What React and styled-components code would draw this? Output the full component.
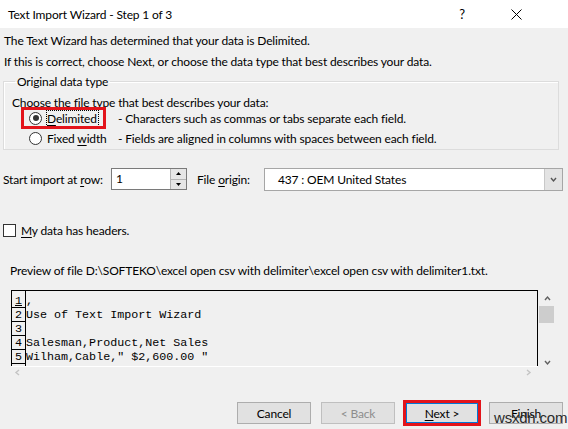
import React from 'react';
import styled, { createGlobalStyle } from 'styled-components';

const GlobalStyle = createGlobalStyle`
  html, body {
    margin: 0;
    padding: 0;
    background: #f0f0f0;
  }
  body {
    font-family: Lato, "Noto Sans", sans-serif;
    font-size: 12px;
    letter-spacing: -0.15px;
    color: #000;
  }
`;

const Window = styled.div`
  position: relative;
  width: 568px;
  height: 429px;
  background: #f0f0f0;
  display: flex;
  flex-direction: column;
  overflow: hidden;
`;

const TitleBar = styled.div`
  height: 28px;
  flex-shrink: 0;
  background: #fff;
  display: flex;
  align-items: center;
  padding: 0 25px 0 8px;
`;

const Title = styled.div`
  flex: 1;
`;

const TitleButton = styled.div`
  width: 54px;
  height: 28px;
  display: flex;
  align-items: center;
  justify-content: center;
  font-size: 13px;
`;

const Body = styled.div`
  display: flex;
  flex-direction: column;
  padding: 2px 5px 0 3px;
`;

const Line = styled.div`
  height: 21px;
  line-height: 21px;
  padding-left: 1px;
  white-space: nowrap;
`;

const GroupBox = styled.fieldset`
  margin: 1px 4px 0 0;
  padding: 7px 8px 1px;
  border: 1px solid #dcdcdc;
  box-shadow: inset 1px 1px 0 #fff;
`;

const Legend = styled.legend`
  padding: 0 2px;
  margin-left: 3px;
  height: 16px;
  line-height: 17px;
`;

const Prompt = styled.div`
  height: 14px;
  line-height: 14px;
  margin-bottom: -2px;
  white-space: nowrap;
`;

const OptionRow = styled.div`
  display: flex;
  align-items: center;
  height: 20px;
  padding-left: 12px;
  white-space: nowrap;
`;

const Option = styled.span`
  width: 94px;
  flex-shrink: 0;
  display: flex;
  align-items: center;
`;

const OptionMark = styled.span`
  display: inline-flex;
  align-items: center;
  gap: 5px;
  height: 16px;
  padding: 0 ${p => (p.$marked ? '5px' : '4px')} 0 5px;
  outline: ${p => (p.$marked ? '3px solid #e3141b' : 'none')};
  outline-offset: 0;
`;

const Radio = styled.span`
  width: 11px;
  height: 11px;
  border-radius: 50%;
  border: 1px solid #333;
  background: #fff;
  display: inline-flex;
  align-items: center;
  justify-content: center;
  &::after {
    content: '';
    width: 6px;
    height: 6px;
    border-radius: 50%;
    background: ${p => (p.$checked ? '#333' : 'transparent')};
  }
`;

const FocusText = styled.span`
  outline: ${p => (p.$focused ? '1px dotted #000' : 'none')};
  outline-offset: 0;
  padding-right: 1px;
`;

const Key = styled.span`
  text-decoration: underline;
  text-underline-offset: 2px;
`;

const FieldRow = styled.div`
  display: flex;
  align-items: center;
  height: 24px;
  margin-top: 17px;
  white-space: nowrap;
`;

const FieldLabel = styled.span`
  width: ${p => p.$width}px;
  flex-shrink: 0;
`;

const Spinner = styled.div`
  width: 76px;
  height: 22px;
  box-sizing: border-box;
  border: 1px solid #7a7a7a;
  background: #fff;
  display: flex;
  margin-right: 10px;
`;

const SpinnerValue = styled.span`
  flex: 1;
  padding-left: 4px;
  line-height: 20px;
`;

const SpinnerButtons = styled.div`
  width: 15px;
  display: flex;
  flex-direction: column;
  border-left: 1px solid #b4b4b4;
`;

const SpinButton = styled.div`
  flex: 1;
  background: #e6e6e6;
  display: flex;
  align-items: center;
  justify-content: center;
  & + & {
    border-top: 1px solid #b4b4b4;
  }
`;

const Select = styled.div`
  width: 299px;
  height: 23px;
  box-sizing: border-box;
  border: 1px solid #a6a6a6;
  background: #fff;
  display: flex;
`;

const SelectValue = styled.span`
  flex: 1;
  padding-left: 13px;
  line-height: 21px;
`;

const SelectArrow = styled.div`
  width: 17px;
  background: #e3e3e3;
  border-left: 1px solid #c8c8c8;
  display: flex;
  align-items: center;
  justify-content: center;
`;

const CheckRow = styled.label`
  display: flex;
  align-items: center;
  gap: 5px;
  height: 16px;
  margin-top: 31px;
`;

const CheckBox = styled.span`
  width: 11px;
  height: 11px;
  border: 1px solid #333;
  background: #fff;
`;

const PreviewLabel = styled.div`
  height: 16px;
  line-height: 16px;
  margin: 25px 0 0 7px;
  white-space: nowrap;
`;

const Preview = styled.div`
  margin: 11px 0 0 8px;
  width: 545px;
  height: 87px;
  display: grid;
  grid-template-columns: 1fr 18px;
  grid-template-rows: 76px 11px;
`;

const TextPane = styled.div`
  border: 1px solid #000;
  border-bottom: none;
  overflow: hidden;
  display: flex;
  flex-direction: column;
  padding-top: 3px;
  font-family: "Liberation Mono", "Courier New", monospace;
  font-size: 11.7px;
  letter-spacing: 0;
  background:
    linear-gradient(#000, #000) 13px 0 / 1px 100% no-repeat;
`;

const PreviewRow = styled.div`
  display: flex;
  height: 14px;
  line-height: 14px;
  white-space: pre;
`;

const LineNo = styled.span`
  width: 13px;
  flex-shrink: 0;
  box-sizing: border-box;
  border-bottom: 1px solid #000;
  text-align: center;
  text-decoration: ${p => (p.$underline ? 'underline' : 'none')};
`;

const LineText = styled.span`
  padding-left: 1px;
`;

const VScroll = styled.div`
  display: flex;
  flex-direction: column;
  align-items: center;
  padding-top: 5px;
`;

const Thumb = styled.div`
  width: 15px;
  height: 17px;
  margin: 4px 0 0 -1px;
  background: #cdcdcd;
`;

const Spacer = styled.div`
  flex: 1;
`;

const HScroll = styled.div`
  border-top: 1px solid #fff;
  display: flex;
  align-items: center;
  justify-content: space-between;
  padding: 0 6px 0 3px;
`;

const Footer = styled.div`
  display: flex;
  justify-content: flex-end;
  gap: 10px;
  margin-top: 25px;
`;

const Button = styled.button`
  width: 74px;
  height: 22px;
  padding: 0;
  font: inherit;
  letter-spacing: inherit;
  color: ${p => (p.disabled ? '#8d8d8d' : '#000')};
  background: #e1e1e1;
  border: 1px solid ${p => (p.$default ? '#0078d7' : p.disabled ? '#bfbfbf' : '#adadad')};
  box-shadow: ${p => (p.$default ? 'inset 0 0 0 1px #0078d7' : 'none')};
  outline: ${p => (p.$marked ? '3px solid #e3141b' : 'none')};
  outline-offset: -1px;
`;

const Watermark = styled.div`
  position: absolute;
  left: 494px;
  top: 409px;
  font-family: "Liberation Sans", sans-serif;
  font-size: 15px;
  color: #2a2a2a;
  letter-spacing: -0.2px;
`;

const Chevron = ({ dir = 'down', color = '#606060', size = 7 }) => {
  const pts = {
    up: '1,5 3.5,2 6,5',
    down: '1,2 3.5,5 6,2',
    left: '5,1 2,3.5 5,6',
    right: '2,1 5,3.5 2,6',
  }[dir];
  return (
    <svg width={size} height={size} viewBox="0 0 7 7">
      <polyline points={pts} fill="none" stroke={color} strokeWidth="1.4" />
    </svg>
  );
};

const Triangle = ({ up }) => (
  <svg width="5" height="3" viewBox="0 0 5 3">
    <polygon points={up ? '0,3 2.5,0 5,3' : '0,0 2.5,3 5,0'} fill="#000" />
  </svg>
);

const previewLines = [
  { no: '1', text: ',', underline: true },
  { no: '2', text: 'Use of Text Import Wizard' },
  { no: '3', text: '' },
  { no: '4', text: 'Salesman,Product,Net Sales' },
  { no: '5', text: 'Wilham,Cable," $2,600.00 "' },
];

export default function App() {
  return (
    <>
      <GlobalStyle />
      <Window>
        <TitleBar>
          <Title>Text Import Wizard - Step 1 of 3</Title>
          <TitleButton>?</TitleButton>
          <TitleButton>
            <svg width="11" height="11" viewBox="0 0 11 11">
              <path d="M0.5 0.5 L10.5 10.5 M10.5 0.5 L0.5 10.5" stroke="#000" strokeWidth="1" />
            </svg>
          </TitleButton>
        </TitleBar>

        <Body>
          <Line>The Text Wizard has determined that your data is Delimited.</Line>
          <Line>If this is correct, choose Next, or choose the data type that best describes your data.</Line>

          <GroupBox>
            <Legend>Original data type</Legend>
            <Prompt>Choose the file type that best describes your data:</Prompt>
            <OptionRow>
              <Option>
                <OptionMark $marked>
                  <Radio $checked />
                  <FocusText $focused><Key>D</Key>elimited</FocusText>
                </OptionMark>
              </Option>
              <span>- Characters such as commas or tabs separate each field.</span>
            </OptionRow>
            <OptionRow>
              <Option>
                <OptionMark>
                  <Radio />
                  <span>Fixed <Key>w</Key>idth</span>
                </OptionMark>
              </Option>
              <span>- Fields are aligned in columns with spaces between each field.</span>
            </OptionRow>
          </GroupBox>

          <FieldRow>
            <FieldLabel $width={108}>Start import at <Key>r</Key>ow:</FieldLabel>
            <Spinner>
              <SpinnerValue>1</SpinnerValue>
              <SpinnerButtons>
                <SpinButton><Triangle up /></SpinButton>
                <SpinButton><Triangle /></SpinButton>
              </SpinnerButtons>
            </Spinner>
            <FieldLabel $width={67}>File <Key>o</Key>rigin:</FieldLabel>
            <Select>
              <SelectValue>437 : OEM United States</SelectValue>
              <SelectArrow><Chevron dir="down" color="#555" /></SelectArrow>
            </Select>
          </FieldRow>

          <CheckRow>
            <CheckBox />
            <span><Key>M</Key>y data has headers.</span>
          </CheckRow>

          <PreviewLabel>
            Preview of file D:\SOFTEKO\excel open csv with delimiter\excel open csv with delimiter1.txt.
          </PreviewLabel>

          <Preview>
            <TextPane>
              {previewLines.map(line => (
                <PreviewRow key={line.no}>
                  <LineNo $underline={line.underline}>{line.no}</LineNo>
                  <LineText>{line.text}</LineText>
                </PreviewRow>
              ))}
            </TextPane>
            <VScroll>
              <Chevron dir="up" />
              <Thumb />
              <Spacer />
              <Chevron dir="down" />
            </VScroll>
            <HScroll>
              <Chevron dir="left" color="#c4c4c4" />
              <Chevron dir="right" color="#c4c4c4" />
            </HScroll>
          </Preview>

          <Footer>
            <Button>Cancel</Button>
            <Button disabled>&lt; Back</Button>
            <Button $default $marked><Key>N</Key>ext &gt;</Button>
            <Button>Finish</Button>
          </Footer>
        </Body>

        <Watermark>wsxdn.com</Watermark>
      </Window>
    </>
  );
}
